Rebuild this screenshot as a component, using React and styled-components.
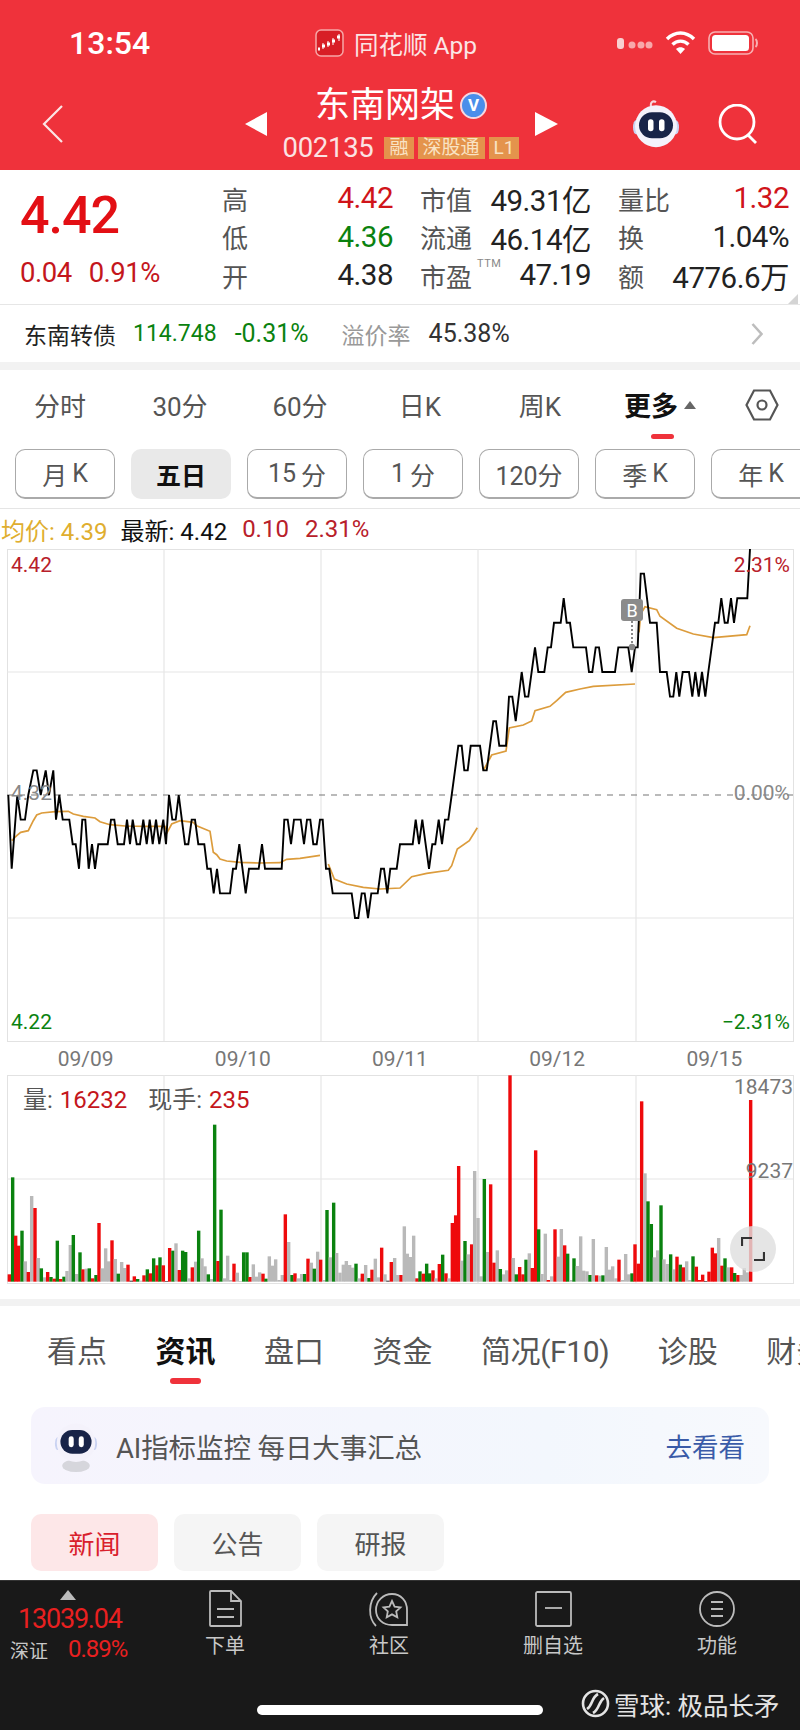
import React from 'react';
import styled, { createGlobalStyle } from 'styled-components';

const RED = '#c4161c';
const GREEN = '#0a820f';
const BAND = '#f2f2f2';

const Global = createGlobalStyle`
  * { box-sizing: border-box; }
  html, body { margin: 0; padding: 0; background: #fff; }
  body { font-family: Roboto, "Noto Sans CJK SC", sans-serif; }
`;

// price line, [x, level] with x in 3x crop units, one level = 0.01 yuan
const lineA = [[25,0],[35,-3],[52,0],[62,-1],[75,-1],[85,0],[100,1],[110,1],[122,0],[137,1],[147,0],[160,1],[168,-1],[178,0],[188,-1],[208,-1],[218,-2],[227,-2],[237,-3],[247,-1],[256,-1],[266,-3],[276,-2],[285,-3],[295,-2],[323,-2],[333,-1],[343,-1],[353,-2],[372,-2],[381,-1],[390,-2],[398,-1],[410,-2],[420,-2],[430,-1],[440,-2],[449,-1],[458,-2],[468,-1],[478,-2],[490,-1],[498,-2],[507,0],[517,-1],[527,-1],[536,0],[555,-2],[565,-2],[575,-1],[585,-1],[595,-2],[613,-2],[622,-3],[632,-3],[641,-4],[651,-3],[660,-4],[690,-4],[699,-3],[708,-3],[718,-2],[737,-4],[747,-3],[776,-3],[786,-2],[795,-3],[845,-3],[853,-1],[863,-1],[873,-2],[882,-1],[902,-1],[912,-2],[921,-1],[931,-1],[940,-2],[950,-2],[960,-1],[968,-1],[978,-3],[988,-3],[998,-4],[1055,-4],[1065,-5],[1075,-5],[1085,-4],[1094,-4],[1104,-5],[1114,-4],[1133,-4],[1143,-3],[1152,-3],[1162,-4],[1171,-3],[1190,-3],[1200,-2]];
const lineB = [[38,-2],[47,-1],[57,-2],[67,-1],[87,-3],[97,-2],[106,-2],[116,-1],[126,-2],[135,-1],[145,-1],[155,0],[175,2],[185,2],[193,1],[203,1],[212,2],[240,2],[250,1],[260,1],[280,3],[288,3],[298,2],[318,2],[327,4],[337,4],[347,3],[365,5],[375,4],[385,4],[405,6],[415,5],[433,5],[443,6],[453,6],[462,7],[482,7],[491,8],[500,7],[510,7],[520,6],[558,6],[567,5],[577,5],[587,6],[597,6],[607,5],[645,5],[655,6],[685,6],[695,5],[705,6],[713,6],[722,9],[732,9],[750,7],[770,7],[780,5],[800,5],[810,4],[820,4],[829,5],[838,4],[848,5],[867,5],[877,4],[886,5],[896,4],[906,5],[916,4],[925,5],[945,7],[955,7],[964,8],[974,7],[983,7],[993,8],[1002,7],[1012,8],[1042,8],[1050,10]];

const linePoints = [
  ...lineA.map(([x, l]) => [x, l]),
  ...lineB.map(([x, l]) => [x + 1200, l]),
].map(([x, l]) => `${(x / 3 - 7).toFixed(1)},${(246 - 24.6 * l).toFixed(1)}`).join(' ');

// average price, one run per trading day
const avgRuns = [
  [[35,905],[50,890],[62,880],[85,875],[100,845],[110,828],[125,822],[165,818],[205,817],[220,825],[250,832],[285,837],[300,848],[330,857],[375,861],[440,862],[495,862],[502,880],[515,855],[540,845],[580,850],[590,860],[630,877],[640,940],[650,947],[660,960],[680,966],[720,970],[780,972],[840,971],[860,961],[900,958],[960,949]],
  [[985,975],[1003,1020],[1040,1035],[1090,1045],[1140,1050],[1200,1047],[1235,1013],[1280,1003],[1345,994],[1355,980],[1372,930],[1408,905],[1432,866]],
  [[1450,695],[1475,648],[1518,636],[1528,567],[1570,558],[1595,546],[1605,515],[1650,502],[1670,485],[1697,460],[1740,450],[1780,442],[1905,435]],
  [[1917,280],[1922,225],[1935,203],[1970,212],[1980,232],[2030,268],[2080,285],[2140,296],[2240,287],[2250,260]],
].map((run) => run.map(([x, y]) => `${(x / 3 - 7).toFixed(1)},${(y / 3 - 10).toFixed(1)}`).join(' '));

// volume bars: x, colour, top, in 3x crop units
const barsA = '28r643 38g352 47r527 56r557 66g512 76s604 85r636 95s408 105r444 115s594 124g625 134s652 143r636 153g651 163r656 172g542 182r657 192g650 201s633 211s555 220g525 230s642 240g577 249r628 259s626 268g625 278r655 288g645 297r489 307s625 317s565 326s604 336r541 346s597 355g641 365s606 374s624 384r614 394k662 403r649 413g657 423s662 432r646 442g628 451r640 461g595 471r616 480g592 490r616 500k663 509r564 519g572 528s550 538r630 548g572 557g576 567s655 577r622 587s605 596g512 606s595 615s619 625g643 635s657 644g194 654r603 663g449 673s655 683s587 692s660 702r611 712s638 721s663 731g577 741g577 750r651 760s613 770s650 779s637 789r641 798g656 808s589 818s617 827s598 837s660 847s645 856r463 866s546 876g645 885r640 895s655 905s642 914g642 924r596 934s608 943g626 953s575 962r599 972s660 981g450 991s592 1001g428 1010s579 1020s638 1030s614 1039s603 1049s615 1058s623 1068g611 1078s655 1087r641 1097s615 1107g654 1116r629 1126s596 1135s652 1145r563 1155s643 1164k662 1174r606 1184s594 1193s645';
const barsB = '3r645 13s499 22s581 32s591 41s527 51r655 60g634 70r641 80g611 89g640 99r631 108s655 118r612 128g584 138r640 147s655 157r489 167r466 176r318 186s602 195g543 205s583 215r553 224s333 234s474 243s649 253g357 263s576 272r373 282r608 292s571 301g627 311s643 320s631 330r46 340s594 349g643 359r621 369r643 378g599 388s580 397r624 407r271 416g508 426s642 436s521 445r660 455s649 465r508 475s590 484s507 494r556 503g581 513s660 522g595 532s618 542s529 551s632 561s634 570g645 580s537 590r646 600s647 609g646 619s561 628s629 638s619 648s655 657r599 667s660 677s582 686s643 696g640 705r553 715r611 725r124 735s340 744g424 754g492 763s592 773s571 783g436 792s598 802s612 812g583 821s628 831r590 841g614 850r622 860s604 869s660 879g589 889r620 898r660 908r644 917k663 927r635 937r563 946r580 956s534 966r617 975g595 985s622 995r622 1004g639 1014r645 1024s645 1033s624 1043s637 1052r120';
const barColors = { r: '#ee0a0c', g: '#0a820f', s: '#b9b9b9', k: '#333' };

const parseBars = (text, offset) =>
  [...text.matchAll(/(\d+)([rgsk])(\d+)/g)].map((m) => ({
    x: (Number(m[1]) + offset) / 3 - 7 - 1.7,
    y: Number(m[3]) / 3 - 15,
    h: (665 - Number(m[3])) / 3,
    fill: barColors[m[2]],
  }));
const bars = [...parseBars(barsA, 0), ...parseBars(barsB, 1200)];

const Page = styled.div`
  width: 800px;
  height: 1731px;
  overflow: hidden;
  position: relative;
  display: flex;
  flex-direction: column;
  background: #fff;
`;

const Header = styled.header`
  height: 170px;
  flex: none;
  background: #ef323b;
  color: #fff;
`;

const StatusBar = styled.div`
  height: 78px;
  padding: 8px 42px 0 69px;
  display: grid;
  grid-template-columns: 1fr auto 1fr;
  align-items: center;
`;

const Time = styled.div`
  font-size: 32px;
  font-weight: 500;
`;

const AppName = styled.div`
  display: flex;
  align-items: center;
  gap: 10px;
  font-size: 24.5px;
  color: #fbe5e5;
  margin-left: -32px;
  margin-right: 3px;
`;

const StatusIcons = styled.div`
  display: flex;
  justify-content: flex-end;
  align-items: center;
  gap: 12px;
`;

const Nav = styled.div`
  height: 92px;
  display: grid;
  grid-template-columns: 1fr auto 1fr;
  align-items: center;
  padding: 0 42px;
`;

const NavEnd = styled.div`
  display: flex;
  align-items: center;
  justify-content: ${(p) => (p.$right ? 'flex-end' : 'flex-start')};
  gap: 38px;
`;

const NavCenter = styled.div`
  display: flex;
  align-items: center;
  gap: 16px;
  padding-left: 3px;
`;

const NavTitleCol = styled.div`
  display: flex;
  flex-direction: column;
  align-items: center;
  margin-top: -2px;
`;

const TitleRow = styled.div`
  display: flex;
  align-items: center;
  gap: 5px;
  font-size: 35px;
  line-height: 44px;
`;

const Verified = styled.span`
  width: 27px;
  height: 27px;
  border-radius: 50%;
  background: #4a8eea;
  border: 2px solid #f6d7e0;
  color: #fff;
  font: 700 17px/23px Roboto, sans-serif;
  text-align: center;
`;

const SwitchArrow = styled.span`
  width: 0;
  height: 0;
  border-top: 12px solid transparent;
  border-bottom: 12px solid transparent;
  ${(p) => (p.$next ? 'border-left: 23px solid #fff;' : 'border-right: 22px solid #fff;')}
`;

const CodeRow = styled.div`
  display: flex;
  align-items: center;
  gap: 4px;
  margin-top: 5px;
  height: 30px;
`;

const Code = styled.span`
  font-size: 27.5px;
  color: #fbe3e3;
  margin-right: 7px;
  letter-spacing: -0.3px;
`;

const Tag = styled.span`
  height: 22px;
  padding: 0 5px;
  background: #e4934c;
  color: #f9e3c4;
  font-size: 19px;
  line-height: 22px;
`;

const QuoteRow = styled.section`
  height: 135px;
  flex: none;
  display: flex;
  position: relative;
  padding-left: 20px;
  border-bottom: 1px solid #e6e6e6;
`;

const PriceCol = styled.div`
  width: 202px;
  padding-top: 16px;
`;

const BigPrice = styled.div`
  font-size: 52px;
  font-weight: 500;
  line-height: 60px;
  color: #e30f14;
  letter-spacing: -1px;
`;

const PriceChange = styled.div`
  display: flex;
  gap: 17px;
  margin-top: 12px;
  font-size: 27.5px;
  line-height: 30px;
  color: ${RED};
  letter-spacing: -0.5px;
`;

const StatGrid = styled.div`
  display: grid;
  grid-template-columns: repeat(3, 171px);
  grid-auto-rows: 38.5px;
  column-gap: 27px;
  padding-top: 9px;
`;

const Stat = styled.div`
  display: flex;
  align-items: center;
  justify-content: space-between;
  position: relative;
  font-size: 29.5px;
  color: #222;
  letter-spacing: -0.5px;
`;

const StatLabel = styled.span`
  font-size: 26px;
  color: #555;
  letter-spacing: 0;
`;

const StatValue = styled.span`
  color: ${(p) => p.$color || '#222'};
`;

const Ttm = styled.sup`
  position: absolute;
  left: 57px;
  top: 1px;
  font-size: 11px;
  letter-spacing: 0.5px;
  color: #888;
`;

const Corner = styled.span`
  position: absolute;
  right: 2px;
  bottom: 0;
  width: 0;
  height: 0;
  border-left: 10px solid transparent;
  border-bottom: 10px solid #d4d4d4;
`;

const BondRow = styled.section`
  height: 57px;
  flex: none;
  display: flex;
  align-items: center;
  padding: 0 37px 0 24px;
  font-size: 23px;
`;

const BondName = styled.span`
  color: ${(p) => (p.$muted ? '#999' : '#222')};
  margin-right: ${(p) => p.$gap}px;
`;

const BondNum = styled.span`
  color: ${(p) => p.$color};
  font-size: ${(p) => p.$size || 23}px;
  margin-right: ${(p) => p.$gap}px;
`;

const Chevron = styled.svg`
  margin-left: auto;
`;

const Band = styled.div`
  height: ${(p) => p.$h}px;
  flex: none;
  margin-top: ${(p) => p.$top || 0}px;
  background: ${BAND};
`;

const PeriodTabs = styled.nav`
  height: 72px;
  flex: none;
  display: flex;
`;

const Period = styled.div`
  width: 120px;
  position: relative;
  display: flex;
  align-items: center;
  justify-content: center;
  gap: 6px;
  padding-bottom: 3px;
  font-size: ${(p) => (p.$active ? 27 : 26)}px;
  color: ${(p) => (p.$active ? '#111' : '#555')};
  font-weight: ${(p) => (p.$active ? 700 : 400)};

  ${(p) => p.$active && `
    &::after {
      content: '';
      position: absolute;
      left: 51px;
      top: 64px;
      width: 23px;
      height: 5px;
      border-radius: 3px;
      background: #ef323b;
    }
  `}
`;

const UpCaret = styled.span`
  width: 0;
  height: 0;
  border-left: 6px solid transparent;
  border-right: 6px solid transparent;
  border-bottom: 8px solid #666;
`;

const GearCell = styled.div`
  width: 80px;
  padding: 0 0 3px 3px;
  display: flex;
  align-items: center;
  justify-content: center;
`;

const PillRow = styled.div`
  height: 67px;
  flex: none;
  display: flex;
  gap: 16px;
  padding: 7px 0 0 15px;
  overflow: hidden;
  border-bottom: 1px solid #e5e5e5;
`;

const Pill = styled.div`
  flex: none;
  width: 100px;
  height: 50px;
  border-radius: 10px;
  display: flex;
  align-items: center;
  justify-content: center;
  gap: ${(p) => (p.$spaced ? 5 : 0)}px;
  font-size: 25px;
  color: ${(p) => (p.$active ? '#111' : '#555')};
  font-weight: ${(p) => (p.$active ? 700 : 400)};
  background: ${(p) => (p.$active ? '#e9e9e9' : '#fff')};
  border: ${(p) => (p.$active ? 'none' : '1px solid #aaa')};
  border-bottom-width: ${(p) => (p.$active ? 0 : 2)}px;
`;

const Legend = styled.div`
  height: 40px;
  flex: none;
  display: flex;
  align-items: center;
  padding-left: 1px;
  font-size: 24px;
`;

const LegendItem = styled.span`
  color: ${(p) => p.$color};
  margin-right: ${(p) => p.$gap}px;
`;

const ChartBox = styled.div`
  position: relative;
  flex: none;
  width: 787px;
  height: ${(p) => p.$h}px;
  margin-left: 7px;
  border: 1px solid #e2e2e2;

  > svg { display: block; position: absolute; left: -1px; top: -1px; overflow: visible; }
`;

const AxisLabel = styled.span`
  position: absolute;
  font-size: 21px;
  line-height: 24px;
  color: ${(p) => p.$color};
  ${(p) => (p.$right ? `right: ${p.$inset ?? 3}px;` : 'left: 3px;')}
  top: ${(p) => p.$top}px;
`;

const DateAxis = styled.div`
  height: 33px;
  flex: none;
  width: 786px;
  margin-left: 7px;
  display: grid;
  grid-template-columns: repeat(5, 1fr);
  align-items: center;
  text-align: center;
  font-size: 21px;
  color: #777;
`;

const VolumeLegend = styled.div`
  position: absolute;
  left: 15px;
  top: 10px;
  display: flex;
  gap: 21px;
  font-size: 24px;
  line-height: 28px;
  color: #555;
`;

const VolumeNum = styled.span`
  color: ${RED};
  margin-left: 7px;
`;

const ExpandButton = styled.div`
  position: absolute;
  left: 722px;
  top: 150px;
  width: 46px;
  height: 46px;
  border-radius: 50%;
  background: rgba(222, 222, 222, 0.8);
  display: flex;
  align-items: center;
  justify-content: center;
`;

const SectionTabs = styled.nav`
  height: 86px;
  flex: none;
  display: flex;
  align-items: center;
  gap: 48.5px;
  padding-left: 47px;
  white-space: nowrap;
  overflow: hidden;
  font-size: 30px;
`;

const SectionTab = styled.div`
  position: relative;
  flex: none;
  color: ${(p) => (p.$active ? '#111' : '#555')};
  font-weight: ${(p) => (p.$active ? 700 : 400)};
  letter-spacing: ${(p) => (p.$tight ? '-0.4px' : '0')};

  ${(p) => p.$active && `
    &::after {
      content: '';
      position: absolute;
      left: 14px;
      top: 51px;
      width: 31px;
      height: 6px;
      border-radius: 3px;
      background: #ef323b;
    }
  `}
`;

const Banner = styled.div`
  height: 77px;
  flex: none;
  margin: 15px 31px 0;
  padding: 0 24px 0 23px;
  border-radius: 14px;
  display: flex;
  align-items: center;
  background: linear-gradient(90deg, #f6f4fd 0%, #f3f7fd 70%, #f7f9fd 100%);
`;

const BannerText = styled.span`
  margin-left: 18px;
  font-size: 27.5px;
  color: #555;
  letter-spacing: -0.1px;
`;

const BannerLink = styled.span`
  margin-left: auto;
  font-size: 26.5px;
  color: #3a5ba8;
`;

const ChipRow = styled.div`
  flex: none;
  display: flex;
  gap: 16px;
  margin: 30px 0 9px 31px;
`;

const Chip = styled.div`
  width: 127px;
  height: 57px;
  border-radius: 10px;
  display: flex;
  align-items: center;
  justify-content: center;
  font-size: 26px;
  background: ${(p) => (p.$active ? '#fde7e8' : '#f5f5f5')};
  color: ${(p) => (p.$active ? '#d9202c' : '#555')};
`;

const BottomBar = styled.footer`
  height: 150px;
  flex: none;
  background: #191919;
  border-top: 1px solid #333;
  display: flex;
  flex-direction: column;
`;

const DockRow = styled.div`
  height: 124px;
  display: flex;
`;

const IndexBlock = styled.div`
  width: 143px;
  padding: 9px 0 0 10px;
  display: flex;
  flex-direction: column;
`;

const IndexArrow = styled.span`
  width: 0;
  height: 0;
  margin-left: 50px;
  border-left: 8px solid transparent;
  border-right: 8px solid transparent;
  border-bottom: 10px solid #bbb;
`;

const IndexValue = styled.div`
  margin: 6px 0 0 8px;
  font-size: 27px;
  line-height: 26px;
  color: #e82020;
  letter-spacing: -1.2px;
`;

const IndexFoot = styled.div`
  display: flex;
  align-items: center;
  gap: 20px;
  margin-top: 3px;
  font-size: 19px;
  color: #c8c8c8;
`;

const IndexPct = styled.span`
  font-size: 24px;
  color: #e82020;
  letter-spacing: -1px;
`;

const DockItem = styled.div`
  width: 164px;
  padding-top: 9px;
  display: flex;
  flex-direction: column;
  align-items: center;
  gap: 3px;
  font-size: 20px;
  color: #c8c8c8;
`;

const DockIcon = styled.div`
  height: 37px;
  display: flex;
  align-items: center;
`;

const HomeBar = styled.div`
  width: 286px;
  height: 10px;
  margin: 0 auto;
  border-radius: 5px;
  background: #fff;
`;

const Watermark = styled.div`
  position: absolute;
  left: 581px;
  top: 1685px;
  display: flex;
  align-items: center;
  gap: 4px;
  font-size: 25.5px;
  color: #e4e4e4;
`;

const Robot = ({ size, shadow }) => (
  <svg width={size} height={size * (shadow ? 1.25 : 1.05)} viewBox={`0 0 48 ${shadow ? 60 : 50}`} aria-hidden="true">
    {shadow && <ellipse cx="24" cy="52" rx="15" ry="7" fill="#d6d6dc" />}
    {!shadow && <path d="M19 8 C18 3 21 1 24 3" fill="none" stroke="#f6d8de" strokeWidth="2" />}
    <ellipse cx="4" cy="28" rx="3" ry="7" fill="#c9d2f2" />
    <ellipse cx="44" cy="28" rx="3" ry="7" fill="#c9d2f2" />
    <circle cx="24" cy="27" r="21" fill="#f4f2fb" />
    <rect x="7" y="13" width="34" height="26" rx="13" fill="#182448" />
    <rect x="16" y="20" width="5.5" height="12" rx="2.7" fill="#fff" />
    <rect x="27" y="20" width="5.5" height="12" rx="2.7" fill="#fff" />
  </svg>
);

const AppLogo = () => (
  <svg width="29" height="28" viewBox="0 0 29 28" aria-hidden="true">
    <rect x="1" y="1" width="27" height="26" rx="5" fill="#d81e26" stroke="#f6a8a8" strokeWidth="1.5" />
    <path d="M3 20 H5 M7 17 H10 M12 15 H15 M17 12 H20 M22 8 H25" stroke="#fff" strokeWidth="3" />
    <path d="M8 14 V20 M13 12 V18 M18 9 V16 M24 5 V12" stroke="#fff" strokeWidth="1" />
  </svg>
);

const Signal = () => (
  <svg width="36" height="12" viewBox="0 0 36 12" aria-hidden="true">
    <rect x="0" y="1" width="7" height="11" rx="3" fill="#f8d0d0" />
    <circle cx="15" cy="8" r="3.5" fill="#f8a8aa" />
    <circle cx="24" cy="8" r="3.5" fill="#f8a8aa" />
    <circle cx="32" cy="8" r="3.5" fill="#f8a8aa" />
  </svg>
);

const Wifi = () => (
  <svg width="31" height="24" viewBox="0 0 31 24" aria-hidden="true" fill="none" stroke="#fff" strokeWidth="3.4">
    <path d="M2 8 C10 0 21 0 29 8" />
    <path d="M7.5 13.5 C12 9 19 9 23.5 13.5" />
    <path d="M15.5 23 L11 18 C13.5 15.8 17.5 15.8 20 18 Z" fill="#fff" stroke="none" />
  </svg>
);

const Battery = () => (
  <svg width="50" height="24" viewBox="0 0 50 24" aria-hidden="true">
    <rect x="1" y="1" width="44" height="22" rx="6" fill="none" stroke="#f8b0b2" strokeWidth="1.6" />
    <rect x="4" y="4" width="37" height="16" rx="3.5" fill="#fff" />
    <path d="M47.5 8 C49.5 9.5 49.5 14.5 47.5 16" fill="none" stroke="#f8b0b2" strokeWidth="2" />
  </svg>
);

const BackIcon = () => (
  <svg width="21" height="38" viewBox="0 0 21 38" fill="none" stroke="#fbe5e5" strokeWidth="2.2" aria-hidden="true">
    <path d="M20 1 L2 19 L20 37" />
  </svg>
);

const SearchIcon = () => (
  <svg width="40" height="40" viewBox="0 0 40 40" fill="none" stroke="#fff" strokeWidth="2.8" aria-hidden="true">
    <circle cx="19" cy="18" r="17" />
    <path d="M30 31 L38 39" />
  </svg>
);

const GearIcon = () => (
  <svg width="34" height="32" viewBox="0 0 34 32" fill="none" stroke="#555" strokeWidth="2.2" aria-hidden="true">
    <path d="M9 1.5 H25 L32.5 16 L25 30.5 H9 L1.5 16 Z" />
    <circle cx="17" cy="16" r="4.5" />
  </svg>
);

const StockIcon = () => (
  <Chevron width="12" height="22" viewBox="0 0 12 22" fill="none" stroke="#bdbdbd" strokeWidth="2.6" aria-hidden="true">
    <path d="M1.5 1 L10.5 11 L1.5 21" />
  </Chevron>
);

const grid = '#e6e6e6';

const PriceChart = () => (
  <ChartBox $h={493}>
    <svg width="787" height="493" viewBox="0 0 787 493" aria-hidden="true">
      {[157, 314, 471, 629].map((x) => <line key={x} x1={x} y1="0" x2={x} y2="492" stroke={grid} strokeWidth="1.2" />)}
      {[123, 369].map((y) => <line key={y} x1="0" y1={y} x2="786" y2={y} stroke={grid} strokeWidth="1.2" />)}
      <line x1="0" y1="246" x2="786" y2="246" stroke="#777" strokeWidth="1.2" strokeDasharray="6 6" />
      {avgRuns.map((points) => <polyline key={points} points={points} fill="none" stroke="#dc9c3c" strokeWidth="1.7" />)}
      <polyline points={linePoints} fill="none" stroke="#000" strokeWidth="1.9" strokeLinejoin="miter" />
      <line x1="625" y1="72" x2="625" y2="98" stroke="#888" strokeWidth="2" strokeDasharray="2 2" />
      <circle cx="625" cy="98" r="3.2" fill="#888" />
      <rect x="614" y="50" width="22" height="22" rx="3" fill="#8b8b8b" />
      <text x="625" y="68" textAnchor="middle" fontSize="18" fill="#fff" fontFamily="Roboto, sans-serif">B</text>
    </svg>
    <AxisLabel $color="#b8202a" $top={3}>4.42</AxisLabel>
    <AxisLabel $color="#888" $top={231}>4.32</AxisLabel>
    <AxisLabel $color={GREEN} $top={460}>4.22</AxisLabel>
    <AxisLabel $right $color="#b8202a" $top={3}>2.31%</AxisLabel>
    <AxisLabel $right $color="#888" $top={231}>0.00%</AxisLabel>
    <AxisLabel $right $color={GREEN} $top={460}>−2.31%</AxisLabel>
  </ChartBox>
);

const VolumeChart = () => (
  <ChartBox $h={209}>
    <svg width="787" height="209" viewBox="0 0 787 209" aria-hidden="true">
      {[157, 314, 471, 629].map((x) => <line key={x} x1={x} y1="0" x2={x} y2="208" stroke={grid} strokeWidth="1.2" />)}
      <line x1="0" y1="104" x2="786" y2="104" stroke={grid} strokeWidth="1.2" />
      {bars.map((b) => <rect key={b.x} x={b.x} y={b.y} width="3.4" height={b.h} fill={b.fill} />)}
    </svg>
    <VolumeLegend>
      <span>量:<VolumeNum>16232</VolumeNum></span>
      <span>现手:<VolumeNum>235</VolumeNum></span>
    </VolumeLegend>
    <AxisLabel $right $inset={0} $color="#777" $top={-1}>18473</AxisLabel>
    <AxisLabel $right $inset={0} $color="#777" $top={83}>9237</AxisLabel>
    <ExpandButton>
      <svg width="24" height="24" viewBox="0 0 24 24" fill="none" stroke="#333" strokeWidth="2.2" aria-hidden="true">
        <path d="M1 9 V1 H11 M23 15 V23 H13" />
      </svg>
    </ExpandButton>
  </ChartBox>
);

const stats = [
  ['高', '4.42', '#d0141a'], ['市值', '49.31亿'], ['量比', '1.32', '#d0141a'],
  ['低', '4.36', GREEN], ['流通', '46.14亿'], ['换', '1.04%'],
  ['开', '4.38'], ['市盈', '47.19'], ['额', '4776.6万'],
];

const dockIcons = {
  order: (
    <svg width="33" height="37" viewBox="0 0 33 37" fill="none" stroke="#bbb" strokeWidth="1.8" aria-hidden="true">
      <path d="M2 1 H22 L32 11 V35 C32 35.6 31.6 36 31 36 H2 C1.4 36 1 35.6 1 35 V2 C1 1.4 1.4 1 2 1 Z" />
      <path d="M22 1 V11 H32 M8 19 H25 M8 27 H25" />
    </svg>
  ),
  community: (
    <svg width="40" height="38" viewBox="0 0 40 38" fill="none" stroke="#bbb" strokeWidth="1.8" aria-hidden="true">
      <path d="M7 36 C-1 28 -1 12 8 3" />
      <path d="M23 4 C14 4 7 11 7 20 C7 29 14 35 23 35 H38 V20 C38 11 32 4 23 4 Z" />
      <path d="M23 11 L25.6 16.6 L31.5 17.3 L27.2 21.4 L28.3 27.3 L23 24.4 L17.7 27.3 L18.8 21.4 L14.5 17.3 L20.4 16.6 Z" />
    </svg>
  ),
  remove: (
    <svg width="37" height="36" viewBox="0 0 37 36" fill="none" stroke="#bbb" strokeWidth="1.8" aria-hidden="true">
      <rect x="1" y="1" width="35" height="34" rx="1.5" />
      <path d="M10 17 H27" />
    </svg>
  ),
  more: (
    <svg width="36" height="36" viewBox="0 0 36 36" fill="none" stroke="#bbb" strokeWidth="1.8" aria-hidden="true">
      <circle cx="18" cy="18" r="17" />
      <path d="M12 11 H24 M12 18 H24 M12 25 H24" />
    </svg>
  ),
};

const App = () => (
  <Page>
    <Global />
    <Header>
      <StatusBar>
        <Time>13:54</Time>
        <AppName><AppLogo />同花顺 App</AppName>
        <StatusIcons><Signal /><Wifi /><Battery /></StatusIcons>
      </StatusBar>
      <Nav>
        <NavEnd><BackIcon /></NavEnd>
        <NavCenter>
          <SwitchArrow />
          <NavTitleCol>
            <TitleRow>东南网架<Verified>V</Verified></TitleRow>
            <CodeRow>
              <Code>002135</Code>
              <Tag>融</Tag>
              <Tag>深股通</Tag>
              <Tag>L1</Tag>
            </CodeRow>
          </NavTitleCol>
          <SwitchArrow $next />
        </NavCenter>
        <NavEnd $right><Robot size={48} /><SearchIcon /></NavEnd>
      </Nav>
    </Header>

    <QuoteRow>
      <PriceCol>
        <BigPrice>4.42</BigPrice>
        <PriceChange><span>0.04</span><span>0.91%</span></PriceChange>
      </PriceCol>
      <StatGrid>
        {stats.map(([label, value, color]) => (
          <Stat key={label}>
            <StatLabel>{label}</StatLabel>
            {label === '市盈' && <Ttm>TTM</Ttm>}
            <StatValue $color={color}>{value}</StatValue>
          </Stat>
        ))}
      </StatGrid>
      <Corner />
    </QuoteRow>

    <BondRow>
      <BondName $gap={17}>东南转债</BondName>
      <BondNum $color={GREEN} $gap={18}>114.748</BondNum>
      <BondNum $color={GREEN} $size={25} $gap={33}>-0.31%</BondNum>
      <BondName $muted $gap={18}>溢价率</BondName>
      <BondNum $color="#333" $size={25} $gap={0}>45.38%</BondNum>
      <StockIcon />
    </BondRow>
    <Band $h={8} />

    <PeriodTabs>
      <Period>分时</Period>
      <Period>30分</Period>
      <Period>60分</Period>
      <Period>日K</Period>
      <Period>周K</Period>
      <Period $active>更多<UpCaret /></Period>
      <GearCell><GearIcon /></GearCell>
    </PeriodTabs>
    <PillRow>
      <Pill $spaced>月<span>K</span></Pill>
      <Pill $active>五日</Pill>
      <Pill $spaced>15<span>分</span></Pill>
      <Pill $spaced>1<span>分</span></Pill>
      <Pill>120分</Pill>
      <Pill $spaced>季<span>K</span></Pill>
      <Pill $spaced>年<span>K</span></Pill>
    </PillRow>
    <Legend>
      <LegendItem $color="#e0ae2e" $gap={13}>均价: 4.39</LegendItem>
      <LegendItem $color="#111" $gap={15}>最新: 4.42</LegendItem>
      <LegendItem $color="#b8202a" $gap={16}>0.10</LegendItem>
      <LegendItem $color="#b8202a" $gap={0}>2.31%</LegendItem>
    </Legend>
    <PriceChart />
    <DateAxis>
      <span>09/09</span><span>09/10</span><span>09/11</span><span>09/12</span><span>09/15</span>
    </DateAxis>
    <VolumeChart />
    <Band $h={7} $top={15} />

    <SectionTabs>
      <SectionTab>看点</SectionTab>
      <SectionTab $active>资讯</SectionTab>
      <SectionTab>盘口</SectionTab>
      <SectionTab>资金</SectionTab>
      <SectionTab $tight>简况(F10)</SectionTab>
      <SectionTab>诊股</SectionTab>
      <SectionTab>财务</SectionTab>
    </SectionTabs>
    <Banner>
      <Robot size={44} shadow />
      <BannerText>AI指标监控 每日大事汇总</BannerText>
      <BannerLink>去看看</BannerLink>
    </Banner>
    <ChipRow>
      <Chip $active>新闻</Chip>
      <Chip>公告</Chip>
      <Chip>研报</Chip>
    </ChipRow>

    <BottomBar>
      <DockRow>
        <IndexBlock>
          <IndexArrow />
          <IndexValue>13039.04</IndexValue>
          <IndexFoot>深证<IndexPct>0.89%</IndexPct></IndexFoot>
        </IndexBlock>
        <DockItem><DockIcon>{dockIcons.order}</DockIcon>下单</DockItem>
        <DockItem><DockIcon>{dockIcons.community}</DockIcon>社区</DockItem>
        <DockItem><DockIcon>{dockIcons.remove}</DockIcon>删自选</DockItem>
        <DockItem><DockIcon>{dockIcons.more}</DockIcon>功能</DockItem>
      </DockRow>
      <HomeBar />
    </BottomBar>
    <Watermark>
      <svg width="29" height="29" viewBox="0 0 29 29" fill="none" stroke="#e4e4e4" strokeWidth="2.6" aria-hidden="true">
        <circle cx="14.5" cy="14.5" r="12.5" />
        <path d="M6 20 C12 16 10 9 17 5 M12 24 C19 20 17 13 23 9" />
      </svg>
      雪球: 极品长矛
    </Watermark>
  </Page>
);

export default App;
